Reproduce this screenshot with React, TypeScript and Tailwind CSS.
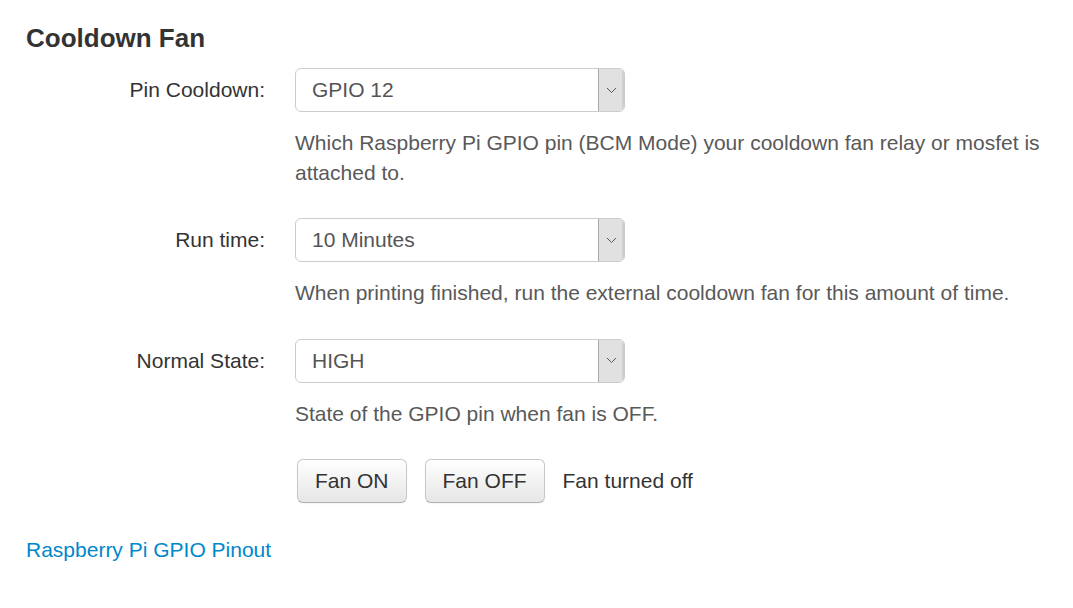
import React from "react";

function Select({ value }: { value: string }) {
  return (
    <div className="flex h-[44px] w-[330px] overflow-hidden rounded-[6px] border border-[#cccccc] bg-white">
      <div className="flex flex-1 items-center pl-[16px] text-[21px] text-[#555555]">{value}</div>
      <div className="flex w-[26px] items-center justify-center border-l border-[#a9a9a9] bg-[#e1e1e1] shadow-[inset_-2px_0_0_#cfcfcf]">
        <svg width="11" height="7" viewBox="0 0 11 7">
          <path d="M1 1 L5.5 5.5 L10 1" fill="none" stroke="#555" strokeWidth="1" />
        </svg>
      </div>
    </div>
  );
}

function Group({ label, value, help }: { label: string; value: string; help: string }) {
  return (
    <div className="mb-[31px] flex">
      <div className="w-[239px] text-right text-[21px] leading-[44px] text-[#333333]">{label}</div>
      <div className="ml-[30px] flex-1">
        <Select value={value} />
        <div className="mt-[16px] text-[21px] leading-[29.5px] text-[#595959]">{help}</div>
      </div>
    </div>
  );
}

function Btn({ children }: { children: React.ReactNode }) {
  return (
    <button className="h-[44px] rounded-[6px] border border-[#c8c8c8] border-b-[#b3b3b3] bg-gradient-to-b from-white to-[#e6e6e6] px-[17px] text-[21px] text-[#333333] shadow-[inset_0_1px_0_rgba(255,255,255,0.2),0_1px_2px_rgba(0,0,0,0.05)]">
      {children}
    </button>
  );
}

export default function App() {
  return (
    <div
      className="min-h-[608px] w-[1073px] bg-white pl-[26px] pr-[26px] pt-[21px]"
      style={{ fontFamily: '"Liberation Sans", Arial, sans-serif' }}
    >
      <h2 className="mb-[13px] text-[26px] font-bold leading-[34px] text-[#333333]">Cooldown Fan</h2>
      <Group
        label="Pin Cooldown:"
        value="GPIO 12"
        help="Which Raspberry Pi GPIO pin (BCM Mode) your cooldown fan relay or mosfet is attached to."
      />
      <Group
        label="Run time:"
        value="10 Minutes"
        help="When printing finished, run the external cooldown fan for this amount of time."
      />
      <Group label="Normal State:" value="HIGH" help="State of the GPIO pin when fan is OFF." />
      <div className="flex">
        <div className="w-[239px]" />
        <div className="ml-[32px] flex items-center gap-[18px]">
          <Btn>Fan ON</Btn>
          <Btn>Fan OFF</Btn>
          <span className="text-[21px] text-[#333333]">Fan turned off</span>
        </div>
      </div>
      <div className="mt-[32px] text-[21px] leading-[29.5px]">
        <a href="#" className="text-[#0088cc]">Raspberry Pi GPIO Pinout</a>
      </div>
    </div>
  );
}
